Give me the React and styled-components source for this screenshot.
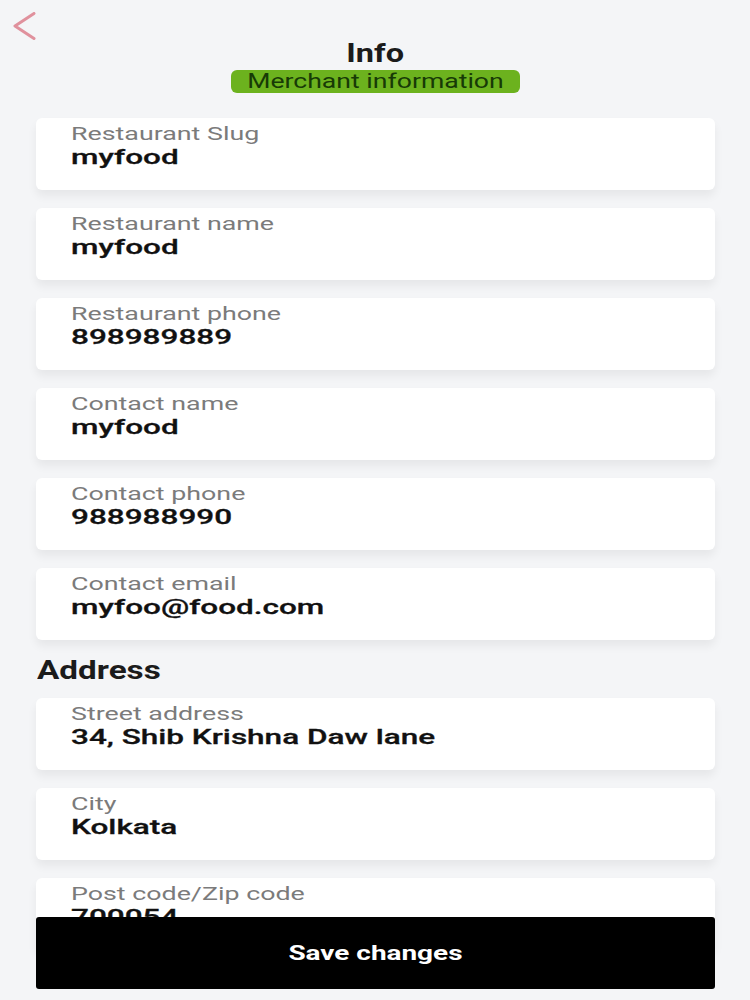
import React from 'react';
import styled, { createGlobalStyle } from 'styled-components';

const GlobalStyle = createGlobalStyle`
    body {
        margin: 0;
        background: #f4f5f7;
        font-family: Roboto, "Liberation Sans", sans-serif;
    }
`;

const fields = [
    { label: 'Restaurant Slug', value: 'myfood' },
    { label: 'Restaurant name', value: 'myfood' },
    { label: 'Restaurant phone', value: '898989889' },
    { label: 'Contact name', value: 'myfood' },
    { label: 'Contact phone', value: '988988990' },
    { label: 'Contact email', value: 'myfoo@food.com' },
];

const address = [
    { label: 'Street address', value: '34, Shib Krishna Daw lane' },
    { label: 'City', value: 'Kolkata' },
    { label: 'Post code/Zip code', value: '700054' },
];

const Field = ({ label, value }) => (
    <Card>
        <Label>{label}</Label>
        <Value>{value}</Value>
    </Card>
);

const App = () => {
    return (
        <Page>
            <GlobalStyle />
            <TopBar>
                <BackButton aria-label="back">
                    <svg width="24" height="28" viewBox="0 0 24 28" fill="none">
                        <path d="M21 1.5 L2 14 L21 26.5" stroke="#e0919d" strokeWidth="3" strokeLinecap="round" strokeLinejoin="round" />
                    </svg>
                </BackButton>
            </TopBar>

            <Heading>
                <Title><span>Info</span></Title>
                <Badge><span>Merchant information</span></Badge>
            </Heading>

            <Form>
                <CardList>
                    {fields.map((f) => <Field key={f.label} {...f} />)}
                </CardList>
                <Section>Address</Section>
                <CardList>
                    {address.map((f) => <Field key={f.label} {...f} />)}
                </CardList>
            </Form>

            <SaveButton><span>Save changes</span></SaveButton>
        </Page>
    );
};

export default App;

const Page = styled.div`
    min-height: 1000px;
    padding-bottom: 60px;
    box-sizing: border-box;
    overflow: hidden;
`;

const TopBar = styled.div`
    height: 40px;
    padding: 12px 0 0 13px;
    box-sizing: border-box;
`;

const BackButton = styled.button`
    display: block;
    padding: 0;
    border: none;
    background: none;
    line-height: 0;
`;

const Heading = styled.div`
    display: flex;
    flex-direction: column;
    align-items: center;
    gap: 2px;
`;

const Title = styled.div`
    font-size: 25px;
    line-height: 28px;
    font-weight: 700;
    color: #1b1b1b;

    span {
        display: inline-block;
        transform: scaleX(1.3);
    }
`;

const Badge = styled.div`
    width: 289px;
    height: 23px;
    border-radius: 6px;
    background: #6cb21e;
    color: #173a06;
    font-size: 20px;
    line-height: 23px;
    text-align: center;

    span {
        display: inline-block;
        transform: scaleX(1.33);
    }
`;

const Form = styled.div`
    padding: 25px 35px 0 36px;
`;

const CardList = styled.div`
    display: flex;
    flex-direction: column;
    gap: 18px;
`;

const Card = styled.div`
    height: 72px;
    box-sizing: border-box;
    padding: 5px 0 0 35px;
    background: #ffffff;
    border-radius: 6px;
    box-shadow: 0 6px 10px rgba(0, 0, 0, 0.06);
`;

const Label = styled.div`
    width: fit-content;
    font-size: 19px;
    line-height: 22px;
    color: #7b7b7b;
    transform: scaleX(1.41);
    transform-origin: left center;
    white-space: nowrap;
`;

const Value = styled.div`
    width: fit-content;
    font-size: 21px;
    line-height: 24px;
    font-weight: 500;
    color: #111111;
    -webkit-text-stroke: 0.3px #111111;
    transform: scaleX(1.5);
    transform-origin: left center;
    white-space: nowrap;
`;

const Section = styled.div`
    width: fit-content;
    margin: 16px 0 12px 1px;
    font-size: 25px;
    line-height: 30px;
    font-weight: 700;
    color: #1b1b1b;
    transform: scaleX(1.33);
    transform-origin: left center;
`;

const SaveButton = styled.button`
    position: fixed;
    left: 36px;
    right: 35px;
    bottom: 11px;
    height: 72px;
    border: none;
    border-radius: 3px;
    background: #000000;
    color: #ffffff;
    font-family: Roboto, "Liberation Sans", sans-serif;
    font-size: 21px;
    font-weight: 700;

    span {
        display: inline-block;
        transform: scaleX(1.33);
    }
`;
